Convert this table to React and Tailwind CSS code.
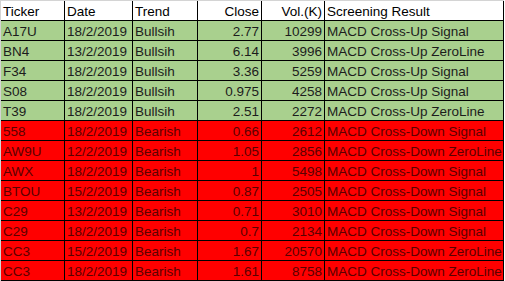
const COLS = [
  ["w-[64px]", "text-left"],
  ["w-[68px]", "text-left"],
  ["w-[65px]", "text-left"],
  ["w-[64px]", "text-right"],
  ["w-[63px]", "text-right"],
  ["w-[179px]", "text-left"],
];

const HEAD = ["Ticker", "Date", "Trend", "Close", "Vol.(K)", "Screening Result"];

const ROWS = [
  ["A17U", "18/2/2019", "Bullsih", "2.77", "10299", "MACD Cross-Up Signal"],
  ["BN4", "13/2/2019", "Bullsih", "6.14", "3996", "MACD Cross-Up ZeroLine"],
  ["F34", "18/2/2019", "Bullsih", "3.36", "5259", "MACD Cross-Up Signal"],
  ["S08", "18/2/2019", "Bullsih", "0.975", "4258", "MACD Cross-Up Signal"],
  ["T39", "18/2/2019", "Bullsih", "2.51", "2272", "MACD Cross-Up ZeroLine"],
  ["558", "18/2/2019", "Bearish", "0.66", "2612", "MACD Cross-Down Signal"],
  ["AW9U", "12/2/2019", "Bearish", "1.05", "2856", "MACD Cross-Down ZeroLine"],
  ["AWX", "18/2/2019", "Bearish", "1", "5498", "MACD Cross-Down Signal"],
  ["BTOU", "15/2/2019", "Bearish", "0.87", "2505", "MACD Cross-Down Signal"],
  ["C29", "13/2/2019", "Bearish", "0.71", "3010", "MACD Cross-Down Signal"],
  ["C29", "18/2/2019", "Bearish", "0.7", "2134", "MACD Cross-Down Signal"],
  ["CC3", "15/2/2019", "Bearish", "1.67", "20570", "MACD Cross-Down ZeroLine"],
  ["CC3", "18/2/2019", "Bearish", "1.61", "8758", "MACD Cross-Down ZeroLine"],
];

function Row({ cells, rowClass }) {
  return (
    <div className={`flex h-[20px] border-b border-black ${rowClass}`}>
      {cells.map((c, i) => (
        <div
          key={i}
          className={`${COLS[i][0]} ${COLS[i][1]} shrink-0 h-full border-r border-black px-[2px] pt-[2px] leading-[17px] whitespace-nowrap overflow-hidden`}
        >
          {c}
        </div>
      ))}
    </div>
  );
}

export default function App() {
  return (
    <div className="w-[505px] h-[281px] bg-white overflow-hidden font-['Liberation_Sans',Arial,sans-serif] text-[13.5px]">
      <div className="w-[504px] border-t border-l border-[#d4d4d4]">
        <Row cells={HEAD} rowClass="bg-white text-black" />
        {ROWS.map((r, i) => (
          <Row
            key={i}
            cells={r}
            rowClass={r[2] === "Bullsih" ? "bg-[#a9d08e] text-[#1c1c1c]" : "bg-[#ff0000] text-[#5a0000]"}
          />
        ))}
      </div>
    </div>
  );
}
